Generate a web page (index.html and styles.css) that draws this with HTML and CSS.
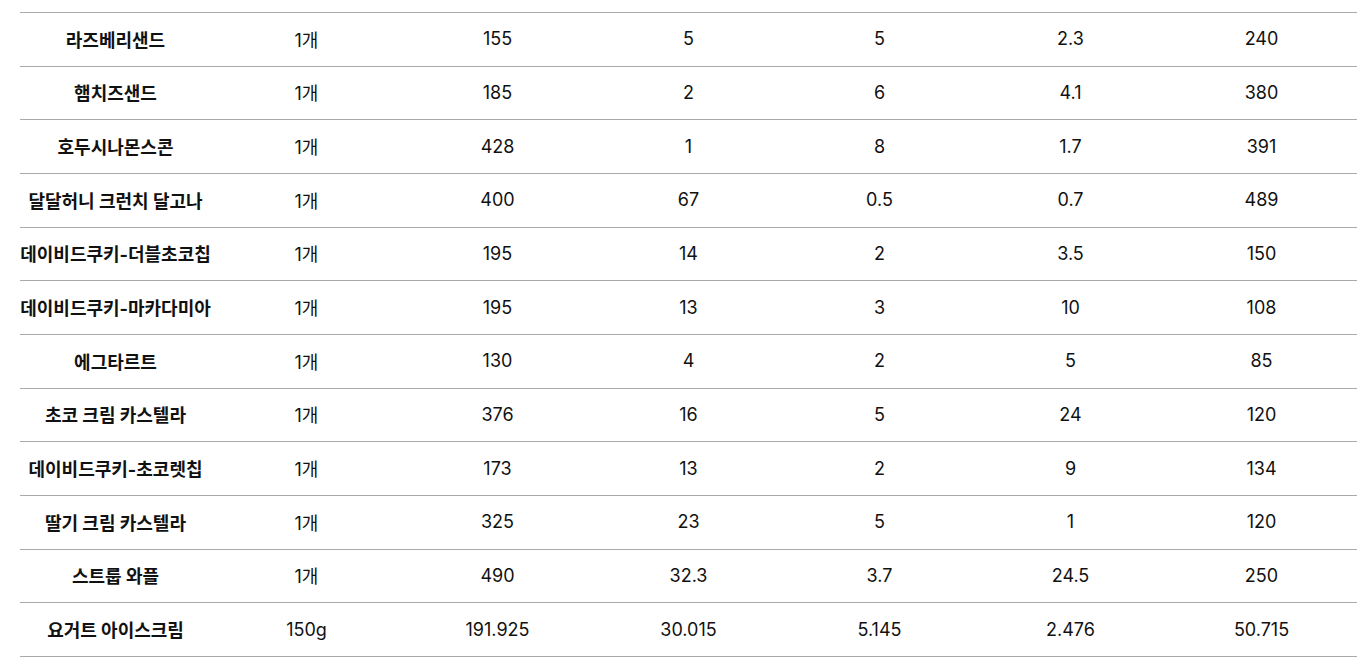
FILE: index.html
```html
<!DOCTYPE html>
<html lang="ko">
<head>
<meta charset="utf-8">
<link rel="stylesheet" href="styles.css">
</head>
<body>
<div class="wrap">
<table class="nutri">
<tbody>
<tr><th>라즈베리샌드</th><td>1개</td><td>155</td><td>5</td><td>5</td><td>2.3</td><td>240</td></tr>
<tr><th>햄치즈샌드</th><td>1개</td><td>185</td><td>2</td><td>6</td><td>4.1</td><td>380</td></tr>
<tr><th>호두시나몬스콘</th><td>1개</td><td>428</td><td>1</td><td>8</td><td>1.7</td><td>391</td></tr>
<tr><th>달달허니 크런치 달고나</th><td>1개</td><td>400</td><td>67</td><td>0.5</td><td>0.7</td><td>489</td></tr>
<tr><th>데이비드쿠키-더블초코칩</th><td>1개</td><td>195</td><td>14</td><td>2</td><td>3.5</td><td>150</td></tr>
<tr><th>데이비드쿠키-마카다미아</th><td>1개</td><td>195</td><td>13</td><td>3</td><td>10</td><td>108</td></tr>
<tr><th>에그타르트</th><td>1개</td><td>130</td><td>4</td><td>2</td><td>5</td><td>85</td></tr>
<tr><th>초코 크림 카스텔라</th><td>1개</td><td>376</td><td>16</td><td>5</td><td>24</td><td>120</td></tr>
<tr><th>데이비드쿠키-초코렛칩</th><td>1개</td><td>173</td><td>13</td><td>2</td><td>9</td><td>134</td></tr>
<tr><th>딸기 크림 카스텔라</th><td>1개</td><td>325</td><td>23</td><td>5</td><td>1</td><td>120</td></tr>
<tr><th>스트룹 와플</th><td>1개</td><td>490</td><td>32.3</td><td>3.7</td><td>24.5</td><td>250</td></tr>
<tr><th>요거트 아이스크림</th><td>150g</td><td>191.925</td><td>30.015</td><td>5.145</td><td>2.476</td><td>50.715</td></tr>
</tbody>
</table>
</div>
</body>
</html>
```
FILE: styles.css
```css
html, body {
  margin: 0;
  padding: 0;
  background: #fff;
}
.wrap {
  padding: 12px 12px 0 20px;
}
.nutri {
  width: 1337px;
  border-collapse: collapse;
  table-layout: fixed;
  font-family: Inter, "Noto Sans CJK KR", sans-serif;
  font-size: 18px;
  color: #111;
}
.nutri tr {
  border-top: 1px solid #aaa;
  border-bottom: 1px solid #aaa;
}
.nutri th,
.nutri td {
  height: 51.67px;
  padding: 0 0 1px;
  text-align: center;
  vertical-align: middle;
  white-space: nowrap;
}
.nutri th {
  font-weight: 700;
  font-size: 18px;
}
.nutri td {
  font-weight: 400;
}
```
